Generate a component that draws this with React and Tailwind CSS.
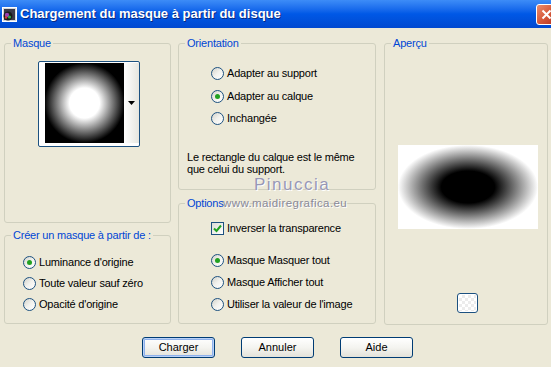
import React from 'react';

const Radio = ({ checked }) => (
  <span className="flex h-[13px] w-[13px] shrink-0 items-center justify-center rounded-full border border-[#1c5180] bg-linear-to-br from-[#d2d2ca] via-[#f2f2ee] to-white">
    {checked && <span className="h-[5px] w-[5px] rounded-full bg-[#21a121]" />}
  </span>
);

const Option = ({ checked, children }) => (
  <div className="flex h-[13px] items-center gap-[3px] text-[11px] leading-[13px] tracking-[-0.2px] text-black">
    <Radio checked={checked} />
    <span>{children}</span>
  </div>
);

const Group = ({ title, className, children }) => (
  <fieldset className={`rounded-[3px] border border-[#d0d0bf] ${className}`}>
    <legend className="ml-[6px] px-[2px] text-[11px] leading-[13px] tracking-[-0.2px] text-[#0046d5]">{title}</legend>
    {children}
  </fieldset>
);

const XpButton = ({ children, focused }) => (
  <button
    className={`flex h-[21px] w-[73px] items-center justify-center rounded-[3px] border border-[#003c74] bg-linear-to-b from-white via-[#f4f4f0] to-[#e3e2da] text-[11px] text-black ${
      focused ? 'shadow-[inset_0_0_0_1px_#b9d1f7,inset_0_0_0_2px_#8eb1ec]' : ''
    }`}
  >
    {children}
  </button>
);

const App = () => {
  return (
    <div
      className="relative h-[367px] w-[551px] overflow-hidden bg-[#ece9d8]"
      style={{ fontFamily: '"Liberation Sans", Arial, sans-serif' }}
    >
      {/* title bar */}
      <div className="flex h-[28px] items-center bg-linear-to-b from-[#3d8cf7] via-[#0058e6] to-[#0149d0] pl-[2px]">
        <svg width="15" height="15" viewBox="0 0 15 15" className="shrink-0">
          <rect x="0.5" y="0.5" width="14" height="14" fill="#d8d8d8" stroke="#ffffff" />
          <rect x="2" y="2" width="11" height="11" fill="#3a3a4a" />
          <circle cx="6" cy="9" r="4.5" fill="#1a1a1a" />
          <circle cx="5" cy="8" r="2.2" fill="#9b3fb0" />
          <circle cx="7.5" cy="10" r="1.6" fill="#2fa84a" />
          <circle cx="4" cy="10.5" r="1.2" fill="#d43a3a" />
        </svg>
        <span className="ml-[3px] text-[13px] font-bold text-white [text-shadow:1px_1px_0_#0a2a80]">
          Chargement du masque à partir du disque
        </span>
        <div className="ml-auto mr-[-6px] flex h-[21px] w-[21px] shrink-0 items-center justify-center rounded-[3px] border border-white bg-linear-to-br from-[#e98d6e] via-[#d75a3b] to-[#b8321f]">
          <svg width="11" height="11" viewBox="0 0 11 11">
            <path d="M1.5 1.5 L9.5 9.5 M9.5 1.5 L1.5 9.5" stroke="white" strokeWidth="2" />
          </svg>
        </div>
      </div>

      {/* groups */}
      <div className="flex pt-[9px]">
        <div className="ml-[4px] flex w-[167px] flex-col gap-[6px]">
          <Group title="Masque" className="h-[186px]">
            <div className="ml-[33px] mt-[11px] flex h-[86px] w-[102px] rounded-[2px] border border-[#1c5180] bg-white pb-[3px] pl-[6px] pt-[1px]">
              <div className="h-[80px] w-[79px] bg-[radial-gradient(circle_at_50%_50%,#ffffff_0px,#ffffff_15px,#000000_40px)]" />
              <div className="flex flex-1 items-center justify-center bg-linear-to-r from-white to-[#e6e6df]">
                <svg width="7" height="4" viewBox="0 0 7 4">
                  <path d="M0 0 H7 L3.5 4 Z" fill="#000" />
                </svg>
              </div>
            </div>
          </Group>
          <Group title="Créer un masque à partir de :" className="h-[95px]">
            <div className="ml-[18px] mt-[14px] flex flex-col gap-[8px]">
              <Option checked>Luminance d'origine</Option>
              <Option>Toute valeur sauf zéro</Option>
              <Option>Opacité d'origine</Option>
            </div>
          </Group>
        </div>

        <div className="ml-[7px] flex w-[198px] flex-col gap-[7px]">
          <Group title="Orientation" className="h-[153px]">
            <div className="ml-[32px] mt-[17px] flex flex-col gap-[9.5px]">
              <Option>Adapter au support</Option>
              <Option checked>Adapter au calque</Option>
              <Option>Inchangée</Option>
            </div>
            <p className="ml-[8px] mt-[26px] text-[11px] leading-[12px] tracking-[-0.2px] text-black">
              Le rectangle du calque est le même
              <br />
              que celui du support.
            </p>
          </Group>
          <Group title="Options" className="h-[127px]">
            <div className="ml-[32px] mt-[12px] flex h-[13px] items-center gap-[3px] text-[11px] tracking-[-0.2px]">
              <span className="flex h-[13px] w-[13px] shrink-0 items-center justify-center border border-[#1c5180] bg-linear-to-br from-[#dcdcd5] to-white">
                <svg width="9" height="9" viewBox="0 0 9 9">
                  <path d="M1 4.5 L3.5 7 L8 1.5" stroke="#21a121" strokeWidth="2" fill="none" />
                </svg>
              </span>
              <span>Inverser la transparence</span>
            </div>
            <div className="ml-[32px] mt-[19px] flex flex-col gap-[9px]">
              <Option checked>Masque Masquer tout</Option>
              <Option>Masque Afficher tout</Option>
              <Option>Utiliser la valeur de l'image</Option>
            </div>
          </Group>
        </div>

        <div className="ml-[8px] w-[164px]">
          <Group title="Aperçu" className="h-[288px]">
            <div className="ml-[13px] mt-[95px] h-[84px] w-[140px] bg-[radial-gradient(closest-side,#000000_0%,#000000_38%,#ffffff_100%)]" />
            <div className="ml-[72px] mt-[64px] flex h-[20px] w-[21px] items-center justify-center rounded-[3px] border border-[#1c5180] bg-white">
              <div className="h-[16px] w-[17px] bg-[repeating-conic-gradient(#ececec_0_25%,#ffffff_0_50%)] bg-[length:6px_6px]" />
            </div>
          </Group>
        </div>
      </div>

      {/* buttons */}
      <div className="mt-[12px] flex gap-[26px] pl-[142px]">
        <XpButton focused>Charger</XpButton>
        <XpButton>Annuler</XpButton>
        <XpButton>Aide</XpButton>
      </div>

      {/* watermark */}
      <div className="pointer-events-none absolute left-[254px] top-[172px] text-[17px] tracking-[1.5px] text-[#9898b6] [text-shadow:1px_1px_0_#ffffff]">
        Pinuccia
      </div>
      <div className="pointer-events-none absolute left-[223px] top-[195px] text-[11.5px] tracking-[0.4px] text-[#8a8a98] [text-shadow:1px_1px_0_#ffffff]">
        www.maidiregrafica.eu
      </div>
    </div>
  );
};

export default App;
